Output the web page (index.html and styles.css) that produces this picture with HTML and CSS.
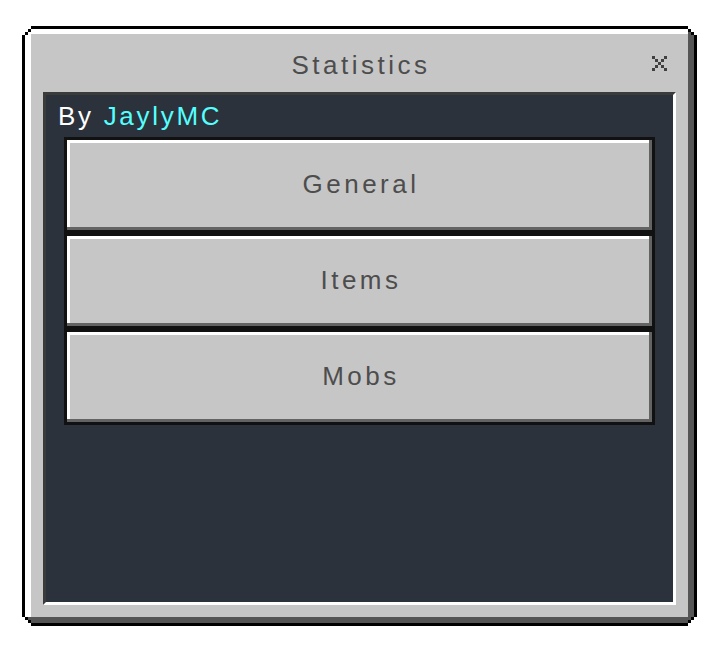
FILE: index.html
```html
<!DOCTYPE html>
<html lang="en">
<head>
<meta charset="utf-8">
<title>Statistics</title>
<link rel="stylesheet" href="styles.css">
</head>
<body>
<div class="window">
  <div class="face">
    <div class="titlebar">
      <span class="title">Statistics</span>
      <button class="close" aria-label="Close">
        <svg width="15" height="15" viewBox="0 0 15 15" shape-rendering="crispEdges">
          <g fill="#404040">
            <rect x="0" y="0" width="3" height="3"/>
            <rect x="12" y="0" width="3" height="3"/>
            <rect x="3" y="3" width="3" height="3"/>
            <rect x="9" y="3" width="3" height="3"/>
            <rect x="6" y="6" width="3" height="3"/>
            <rect x="3" y="9" width="3" height="3"/>
            <rect x="9" y="9" width="3" height="3"/>
            <rect x="0" y="12" width="3" height="3"/>
            <rect x="12" y="12" width="3" height="3"/>
          </g>
        </svg>
      </button>
    </div>
    <div class="panel">
      <div class="byline">By <span class="author">JaylyMC</span></div>
      <div class="menu">
        <button class="menu-btn">General</button>
        <button class="menu-btn">Items</button>
        <button class="menu-btn">Mobs</button>
      </div>
    </div>
  </div>
</div>
</body>
</html>
```

FILE: styles.css
```css
* {
  box-sizing: border-box;
}

body {
  margin: 0;
  background: #ffffff;
  font-family: "Liberation Sans", Arial, sans-serif;
}

.window {
  margin: 26px 0 0 22px;
  width: 675px;
  height: 600px;
  padding: 3px;
  background: #000000;
  clip-path: polygon(
    0 9px, 3px 9px, 3px 6px, 6px 6px, 6px 3px, 9px 3px, 9px 0,
    calc(100% - 9px) 0, calc(100% - 9px) 3px, calc(100% - 6px) 3px, calc(100% - 6px) 6px, calc(100% - 3px) 6px, calc(100% - 3px) 9px, 100% 9px,
    100% calc(100% - 9px), calc(100% - 3px) calc(100% - 9px), calc(100% - 3px) calc(100% - 6px), calc(100% - 6px) calc(100% - 6px), calc(100% - 6px) calc(100% - 3px), calc(100% - 9px) calc(100% - 3px), calc(100% - 9px) 100%,
    9px 100%, 9px calc(100% - 3px), 6px calc(100% - 3px), 6px calc(100% - 6px), 3px calc(100% - 6px), 3px calc(100% - 9px), 0 calc(100% - 9px)
  );
}

.face {
  height: 100%;
  display: flex;
  flex-direction: column;
  padding: 5px 6px 6px 6px;
  background: #c6c6c6;
  box-shadow: inset -6px -6px 0 #555555, inset 6px 5px 0 #ffffff;
  clip-path: polygon(
    0 6px, 3px 6px, 3px 3px, 6px 3px, 6px 0,
    calc(100% - 6px) 0, calc(100% - 6px) 3px, calc(100% - 3px) 3px, calc(100% - 3px) 6px, 100% 6px,
    100% calc(100% - 6px), calc(100% - 3px) calc(100% - 6px), calc(100% - 3px) calc(100% - 3px), calc(100% - 6px) calc(100% - 3px), calc(100% - 6px) 100%,
    6px 100%, 6px calc(100% - 3px), 3px calc(100% - 3px), 3px calc(100% - 6px), 0 calc(100% - 6px)
  );
}

.titlebar {
  position: relative;
  height: 58px;
  padding-top: 5px;
  text-align: center;
}

.title {
  display: block;
  font-size: 26px;
  line-height: 53px;
  letter-spacing: 3.5px;
  color: #4d4d4d;
  padding-left: 3px;
}

.close {
  position: absolute;
  top: 22px;
  right: 21px;
  width: 15px;
  height: 15px;
  padding: 0;
  border: 0;
  background: none;
  display: block;
}

.close svg {
  display: block;
}

.panel {
  flex: 1;
  margin: 0 12px 12px 12px;
  padding-top: 5px;
  background: #2b323b;
  border-style: solid;
  border-width: 3px;
  border-color: #3b3b3b #ffffff #ffffff #3b3b3b;
}

.byline {
  padding-left: 12px;
  font-size: 26px;
  line-height: 32px;
  letter-spacing: 2.7px;
  color: #ffffff;
}

.author {
  color: #55ffff;
}

.menu {
  margin: 5px 18px 0 18px;
  display: flex;
  flex-direction: column;
}

.menu-btn {
  display: block;
  width: 100%;
  height: 96px;
  padding: 0 0 3px 3px;
  border: 3px solid #111111;
  background: #c6c6c6;
  box-shadow: inset -3px -3px 0 #636363, inset 3px 3px 0 #ffffff;
  font-family: inherit;
  font-size: 26px;
  line-height: 30px;
  letter-spacing: 3.5px;
  color: #4d4d4d;
  text-align: center;
}
```
